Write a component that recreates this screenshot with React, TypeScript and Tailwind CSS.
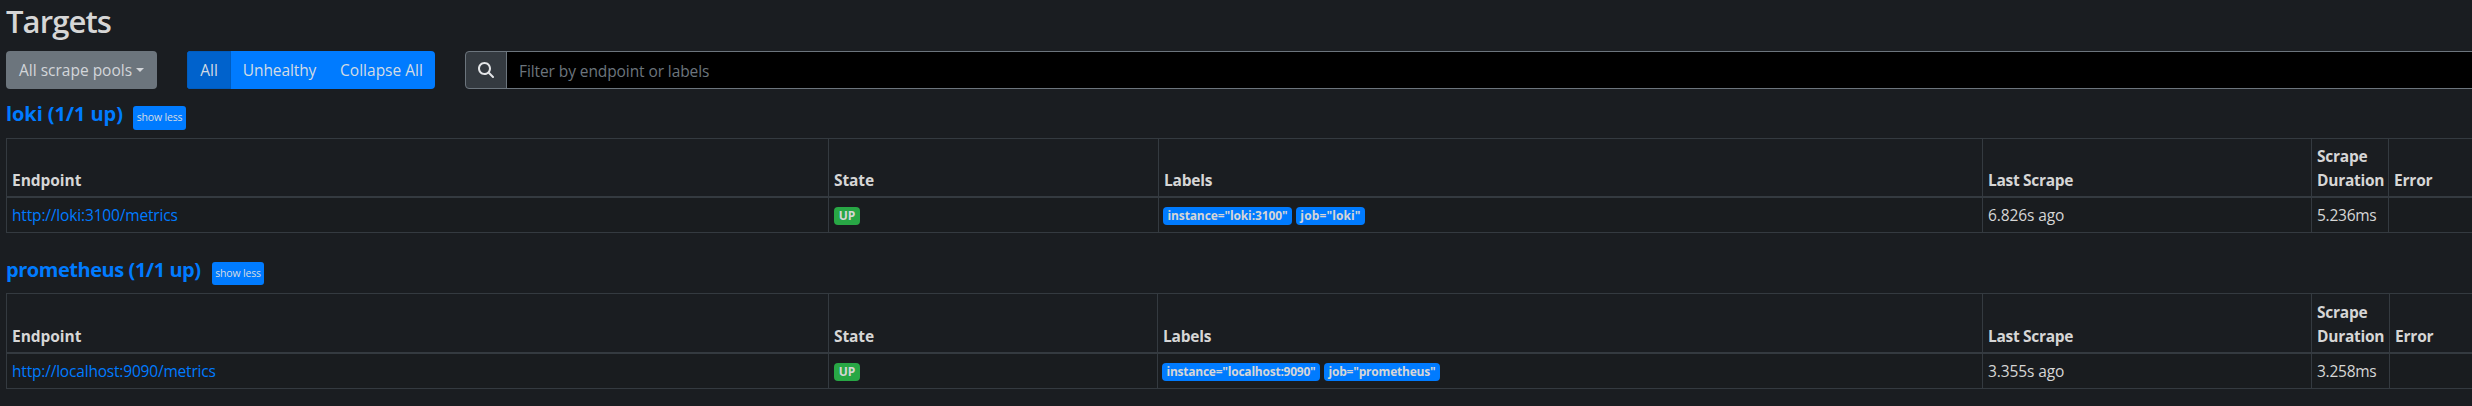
import React from "react";
import { FaMagnifyingGlass } from "react-icons/fa6";

type Label = { text: string; tracking: string };

type Pool = {
  title: string;
  titleClass: string;
  headClass: string;
  buttonClass: string;
  gridClass: string;
  headerHeight: string;
  endpoint: string;
  endpointClass: string;
  labels: Label[];
  lastScrape: string;
  duration: string;
};

const pools: Pool[] = [
  {
    title: "loki (1/1 up)",
    titleClass: "w-[127px] tracking-[-0.08px]",
    headClass: "h-[49px] pt-3",
    buttonClass: "w-[53px] h-6",
    gridClass: "grid-cols-[822px_330px_824px_329px_77px_102px]",
    headerHeight: "h-[60px]",
    endpoint: "http://loki:3100/metrics",
    endpointClass: "tracking-[-0.16px]",
    labels: [
      { text: 'instance="loki:3100"', tracking: "w-[129px] tracking-[-0.12px]" },
      { text: 'job="loki"', tracking: "w-[69px] tracking-[0.12px]" },
    ],
    lastScrape: "6.826s ago",
    duration: "5.236ms",
  },
  {
    title: "prometheus (1/1 up)",
    titleClass: "w-[206px] tracking-[-0.45px]",
    headClass: "h-[60px] pt-6",
    buttonClass: "w-[52px] h-[23px]",
    gridClass: "grid-cols-[822px_329px_825px_329px_78px_101px]",
    headerHeight: "h-[61px]",
    endpoint: "http://localhost:9090/metrics",
    endpointClass: "tracking-[-0.19px]",
    labels: [
      { text: 'instance="localhost:9090"', tracking: "w-[158px] tracking-[-0.23px]" },
      { text: 'job="prometheus"', tracking: "w-[116px] tracking-[-0.2px]" },
    ],
    lastScrape: "3.355s ago",
    duration: "3.258ms",
  },
];

const headers = [
  { text: "Endpoint", className: "tracking-[-0.05px]" },
  { text: "State", className: "tracking-[-0.1px]" },
  { text: "Labels", className: "tracking-[-0.2px]" },
  { text: "Last Scrape", className: "tracking-[-0.3px]" },
  { text: "Scrape Duration", className: "tracking-[-0.25px]" },
  { text: "Error", className: "tracking-[-0.2px]" },
];

function PoolPanel({ pool }: { pool: Pool }) {
  const cell = "border-l border-[#343a40] pl-[5px] pt-[5px]";
  return (
    <section>
      <div className={`flex items-start ${pool.headClass}`}>
        <h3 className={`mt-px shrink-0 whitespace-nowrap text-xl leading-6 font-bold text-[#007bff] ${pool.titleClass}`}>
          {pool.title}
        </h3>
        <button
          className={`mt-[5px] flex items-center justify-center rounded-[3px] bg-[#007bff] pb-px text-[10.5px] leading-none tracking-[-0.18px] whitespace-nowrap text-[#d6dce3] ${pool.buttonClass}`}
        >
          show less
        </button>
      </div>
      <div className="border-t border-b border-[#343a40]">
        <div className={`grid border-b-2 border-[#343a40] font-bold ${pool.gridClass} ${pool.headerHeight} -mt-px pt-px`}>
          {headers.map((h) => (
            <div key={h.text} className={`flex items-end border-l border-[#343a40] pb-1 pl-[5px] ${h.className}`}>
              {h.text}
            </div>
          ))}
        </div>
        <div className={`grid h-[34px] bg-[#191c1f] ${pool.gridClass}`}>
          <div className={cell}>
            <a className={`text-[#007bff] ${pool.endpointClass}`}>{pool.endpoint}</a>
          </div>
          <div className="border-l border-[#343a40] pt-[9px] pl-[5px]">
            <span className="flex h-[18px] w-[26px] items-center justify-center rounded bg-[#28a745] text-xs leading-none font-bold">
              UP
            </span>
          </div>
          <div className="flex gap-1 border-l border-[#343a40] pt-[9px] pl-1">
            {pool.labels.map((l) => (
              <span
                key={l.text}
                className={`flex h-[18px] items-center justify-center rounded bg-[#007bff] text-xs leading-none font-bold whitespace-nowrap ${l.tracking}`}
              >
                {l.text}
              </span>
            ))}
          </div>
          <div className={`${cell} tracking-[-0.1px]`}>{pool.lastScrape}</div>
          <div className={`${cell} tracking-[-0.25px]`}>{pool.duration}</div>
          <div className={cell} />
        </div>
      </div>
    </section>
  );
}

export default function App() {
  return (
    <main className="h-[406px] w-full overflow-hidden bg-[#1a1d21] pt-0.5 pl-1.5 font-['Open_Sans','Noto_Sans',sans-serif] text-[15.5px] leading-6 text-[#d6d6d6]">
      <h2 className="mb-[11px] text-[31px] leading-[38px] font-semibold tracking-[-0.9px]">Targets</h2>
      <div className="flex h-[38px]">
        <button className="mr-[30px] flex w-[151px] items-center rounded bg-[#6c757d] pl-[13px] whitespace-nowrap text-[#d3d6da]">
          All scrape pools
          <span className="ml-1 border-x-[4.8px] border-t-[4.8px] border-x-transparent border-t-[#d3d6da]" />
        </button>
        <div className="mr-[30px] flex w-[248px] overflow-hidden rounded bg-[#007bff] whitespace-nowrap text-[#d3dbe4]">
          <button className="w-11 border border-[#005cbf] bg-[#0062cc]">All</button>
          <button className="w-24 pl-px tracking-[-0.1px]">Unhealthy</button>
          <button className="w-[108px] pl-px">Collapse All</button>
        </div>
        <div className="flex min-w-0 flex-1">
          <span className="flex w-[42px] shrink-0 items-center justify-center rounded-l border border-[#6c757d] bg-[#343a40] text-base text-[#e3e5e7]">
            <FaMagnifyingGlass />
          </span>
          <input
            className="-ml-px min-w-0 flex-1 border-y border-l border-[#6c757d] bg-black pt-0.5 pl-3 tracking-[-0.09px] outline-none placeholder:text-[#6c757d]"
            placeholder="Filter by endpoint or labels"
          />
        </div>
      </div>
      {pools.map((p) => (
        <PoolPanel key={p.title} pool={p} />
      ))}
    </main>
  );
}
